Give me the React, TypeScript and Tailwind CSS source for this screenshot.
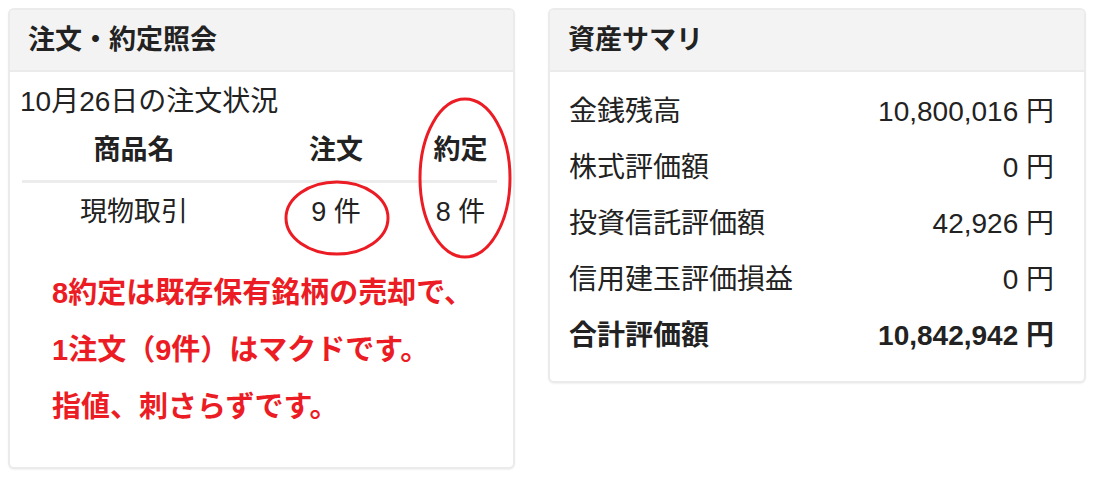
const font = "font-['Liberation_Sans','Noto_Sans_CJK_JP',sans-serif]";

const assets = [
  { label: '金銭残高', value: '10,800,016' },
  { label: '株式評価額', value: '0' },
  { label: '投資信託評価額', value: '42,926' },
  { label: '信用建玉評価損益', value: '0' },
];

function OrderCard() {
  return (
    <div className="relative w-[507px] h-[461px] rounded-md border-2 border-[#ebebeb] bg-white shadow-[0_1px_2px_rgba(0,0,0,0.06)] overflow-hidden">
      <div className="h-[62px] flex items-center px-[18px] bg-[#f3f3f3] border-b-2 border-[#ebebeb]">
        <span className="text-[27px] font-bold text-[#222]">注文・約定照会</span>
      </div>

      <div className="pt-[12px] pl-[10px] pr-[16px]">
        <div className="h-[36px] leading-[36px] text-[28px] text-[#222]">10月26日の注文状況</div>

        {/* Table */}
        <div className="grid grid-cols-[228px_176px_1fr] h-[60px] items-center text-[27px] font-bold text-[#222]">
          <div className="text-center">商品名</div>
          <div className="text-center">注文</div>
          <div className="text-center">約定</div>
        </div>
        <div className="ml-[2px] h-[3px] bg-[#ececec]" />
        <div className="grid grid-cols-[228px_176px_1fr] h-[58px] items-center text-[27px] text-[#222]">
          <div className="text-center">現物取引</div>
          <div className="text-center">9 件</div>
          <div className="text-center">8 件</div>
        </div>

        <div className="mt-[24px] pl-[32px] text-[29px] leading-[57px] font-bold text-[#ec1c24]">
          <div>8約定は既存保有銘柄の売却で、</div>
          <div>1注文（9件）はマクドです。</div>
          <div>指値、刺さらずです。</div>
        </div>
      </div>

      {/* hand-drawn annotations */}
      <svg className="absolute inset-0 pointer-events-none" width="507" height="461" viewBox="0 0 507 461">
        <ellipse cx="327" cy="208" rx="51" ry="36" fill="none" stroke="#ec1c24" strokeWidth="3" />
        <ellipse cx="455" cy="168" rx="45" ry="79" fill="none" stroke="#ec1c24" strokeWidth="3" />
      </svg>
    </div>
  );
}

function AssetCard() {
  return (
    <div className="w-[538px] h-[375px] rounded-md border-2 border-[#ebebeb] bg-white shadow-[0_1px_2px_rgba(0,0,0,0.06)] overflow-hidden">
      <div className="h-[62px] flex items-center px-[18px] bg-[#f3f3f3] border-b-2 border-[#ebebeb]">
        <span className="text-[27px] font-bold text-[#222]">資産サマリ</span>
      </div>
      <div className="pt-[12px] pl-[19px] pr-[30px] text-[28px] text-[#222]">
        {assets.map(({ label, value }) => (
          <div key={label} className="h-[56px] flex items-center justify-between">
            <span>{label}</span>
            <span>{value} 円</span>
          </div>
        ))}
        <div className="h-[56px] flex items-center justify-between font-bold">
          <span>合計評価額</span>
          <span>10,842,942 円</span>
        </div>
      </div>
    </div>
  );
}

export default function App() {
  return (
    <div className={`${font} w-[1100px] h-[482px] bg-white flex items-start gap-[33px] pt-[8px] pl-[8px]`}>
      <OrderCard />
      <AssetCard />
    </div>
  );
}
